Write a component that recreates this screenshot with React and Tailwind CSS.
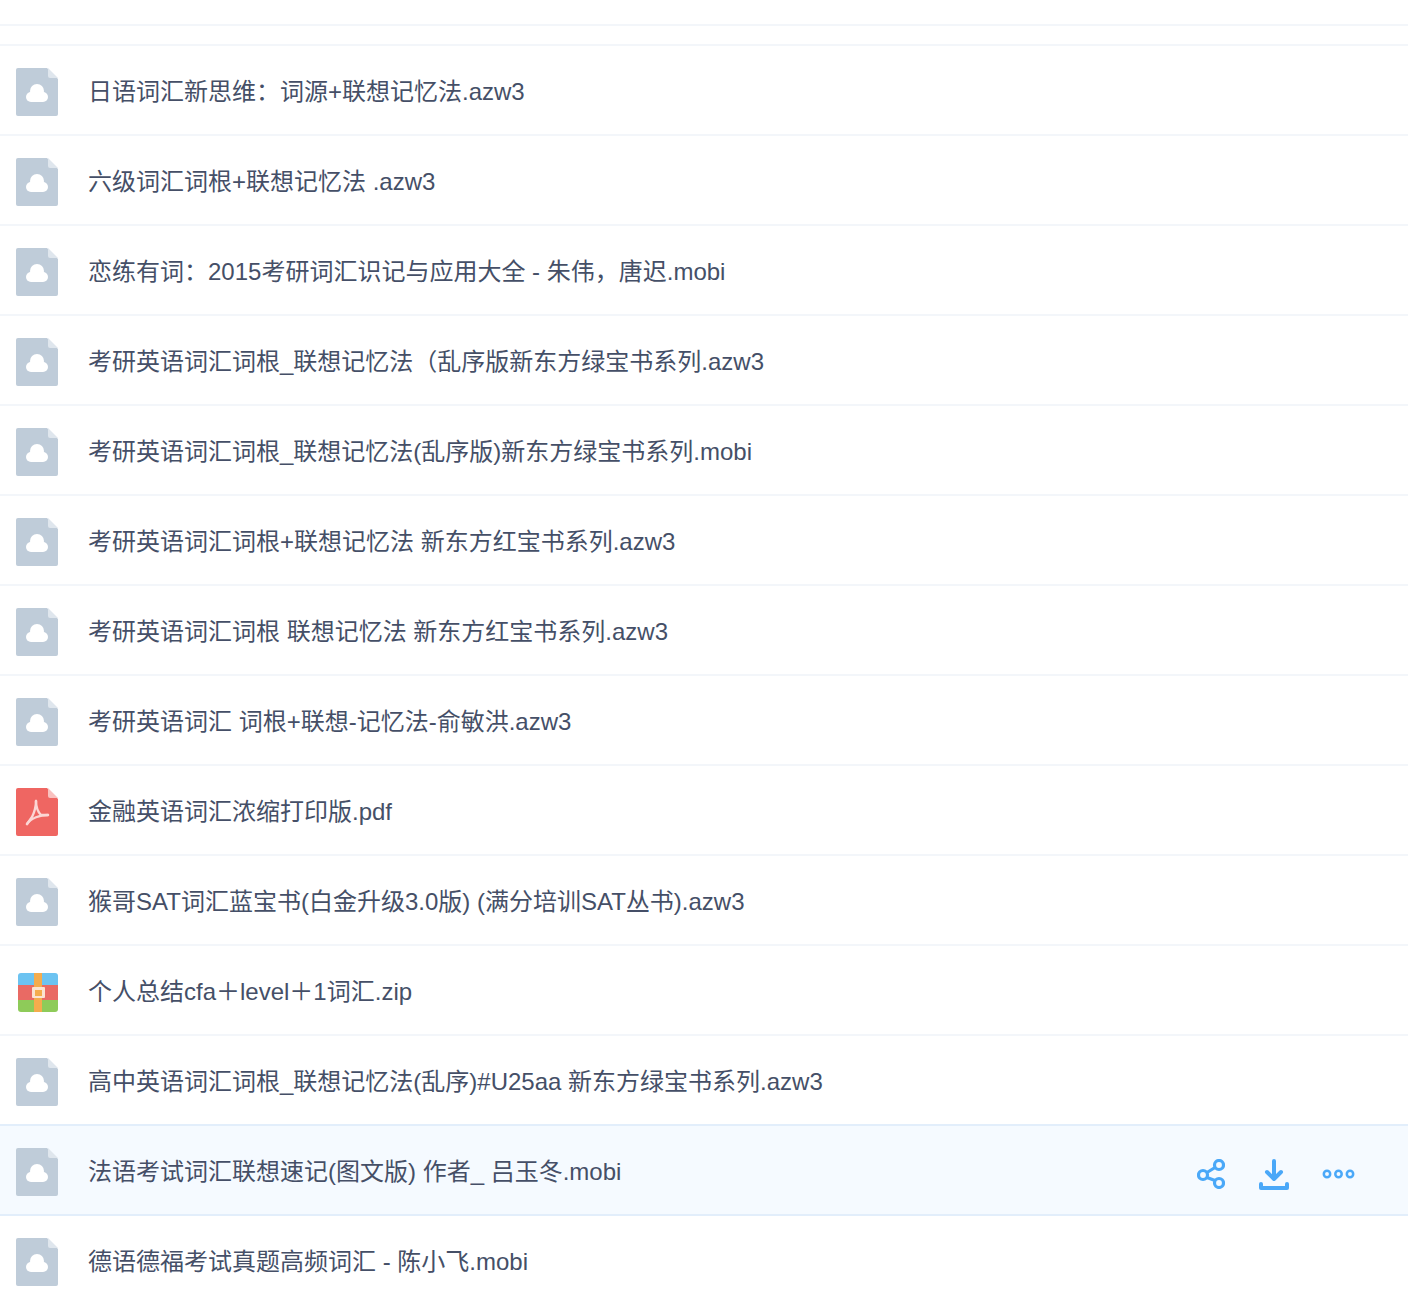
const files = [
  { name: '日语词汇新思维：词源+联想记忆法.azw3', type: 'other' },
  { name: '六级词汇词根+联想记忆法 .azw3', type: 'other' },
  { name: '恋练有词：2015考研词汇识记与应用大全 - 朱伟，唐迟.mobi', type: 'other' },
  { name: '考研英语词汇词根_联想记忆法（乱序版新东方绿宝书系列.azw3', type: 'other' },
  { name: '考研英语词汇词根_联想记忆法(乱序版)新东方绿宝书系列.mobi', type: 'other' },
  { name: '考研英语词汇词根+联想记忆法 新东方红宝书系列.azw3', type: 'other' },
  { name: '考研英语词汇词根 联想记忆法 新东方红宝书系列.azw3', type: 'other' },
  { name: '考研英语词汇 词根+联想-记忆法-俞敏洪.azw3', type: 'other' },
  { name: '金融英语词汇浓缩打印版.pdf', type: 'pdf' },
  { name: '猴哥SAT词汇蓝宝书(白金升级3.0版) (满分培训SAT丛书).azw3', type: 'other' },
  { name: '个人总结cfa＋level＋1词汇.zip', type: 'zip' },
  { name: '高中英语词汇词根_联想记忆法(乱序)#U25aa 新东方绿宝书系列.azw3', type: 'other' },
  { name: '法语考试词汇联想速记(图文版) 作者_ 吕玉冬.mobi', type: 'other', active: true },
  { name: '德语德福考试真题高频词汇 - 陈小飞.mobi', type: 'other' },
]

function CloudFile() {
  return (
    <svg width="42" height="48" viewBox="0 0 42 48">
      <path d="M2 0H31L42 11V46a2 2 0 0 1-2 2H2a2 2 0 0 1-2-2V2a2 2 0 0 1 2-2Z" fill="#bfccd9" />
      <path d="M32 0L42 10H34a2 2 0 0 1-2-2Z" fill="#dfe6ed" />
      <g fill="#fff">
        <circle cx="21" cy="23" r="7" />
        <circle cx="15" cy="29" r="5" />
        <circle cx="27" cy="29" r="5" />
        <rect x="15" y="26" width="12" height="8" />
      </g>
    </svg>
  )
}

function PdfFile() {
  return (
    <svg width="42" height="48" viewBox="0 0 42 48">
      <path d="M2 0H31L42 11V46a2 2 0 0 1-2 2H2a2 2 0 0 1-2-2V2a2 2 0 0 1 2-2Z" fill="#ef6662" />
      <path d="M32 0L42 10H34a2 2 0 0 1-2-2Z" fill="#f9c1bf" />
      <g fill="none" stroke="#fbd6d4" strokeWidth="2.4" strokeLinecap="round">
        <path d="M20 13C20 19 18 25 16 29L11 36" />
        <path d="M20 13C20 19 22 24 25 27L32 27" />
        <path d="M11 36C15 30 24 27 32 27" />
      </g>
    </svg>
  )
}

function ZipFile() {
  return (
    <svg width="40" height="39" viewBox="0 0 40 39" className="ml-[2px]">
      <path d="M3 0H37a3 3 0 0 1 3 3V12H0V3a3 3 0 0 1 3-3Z" fill="#6cc3f1" />
      <rect x="0" y="12" width="40" height="15" fill="#e96a64" />
      <path d="M0 27H40V36a3 3 0 0 1-3 3H3a3 3 0 0 1-3-3Z" fill="#8ecb59" />
      <rect x="16" y="0" width="8" height="39" fill="#f4ac4d" />
      <rect x="14" y="14" width="13" height="11" rx="1" fill="#fbe3d0" />
      <rect x="17" y="17" width="7" height="6" fill="#f4ac4d" />
    </svg>
  )
}

function FileIcon({ type }) {
  if (type === 'pdf') return <PdfFile />
  if (type === 'zip') return <ZipFile />
  return <CloudFile />
}

function ShareIcon() {
  return (
    <svg width="28" height="30" viewBox="0 0 28 30" fill="none" stroke="#4aa8f8" strokeWidth="3.2">
      <circle cx="6" cy="16" r="4.5" />
      <circle cx="22" cy="6" r="4.5" />
      <circle cx="22" cy="24" r="4.5" />
      <path d="M10 13.5L18 8.5M10 18.5L18 21.5" />
    </svg>
  )
}

function DownloadIcon() {
  return (
    <svg width="30" height="32" viewBox="0 0 30 32" fill="none" stroke="#4aa8f8" strokeWidth="4" strokeLinecap="round" strokeLinejoin="round">
      <path d="M15 3V21M8 14L15 21L22 14" />
      <path d="M2 26V30H28V26" />
    </svg>
  )
}

function MoreIcon() {
  return (
    <svg width="33" height="10" viewBox="0 0 33 10" fill="none" stroke="#4aa8f8" strokeWidth="2.5">
      <circle cx="5" cy="5" r="3.2" />
      <circle cx="16.5" cy="5" r="3.2" />
      <circle cx="28" cy="5" r="3.2" />
    </svg>
  )
}

export default function App() {
  return (
    <div className="min-h-[1300px] bg-white overflow-hidden font-['Liberation_Sans','Noto_Sans_CJK_SC',sans-serif]">
      <div className="h-[26px] border-b-2 border-[#f3f6fa]" />
      <div className="h-[20px] border-b-2 border-[#f3f6fa]" />
      {files.map(file => (
        <div
          key={file.name}
          className={`h-[90px] pl-4 pr-[53px] flex items-center border-b-2 ${file.active ? 'bg-[#f5faff] border-[#e2eefb] shadow-[0_-2px_0_#e2eefb]' : 'border-[#f3f6fa]'}`}
        >
          <div className="w-[72px] shrink-0 flex items-center mt-1">
            <FileIcon type={file.type} />
          </div>
          <span className="text-[24px] leading-[32px] text-[#454f67] whitespace-nowrap mt-1">{file.name}</span>
          {file.active && (
            <div className="ml-auto flex items-center mt-2">
              <ShareIcon />
              <div className="ml-[34px]">
                <DownloadIcon />
              </div>
              <div className="ml-[33px]">
                <MoreIcon />
              </div>
            </div>
          )}
        </div>
      ))}
    </div>
  )
}
